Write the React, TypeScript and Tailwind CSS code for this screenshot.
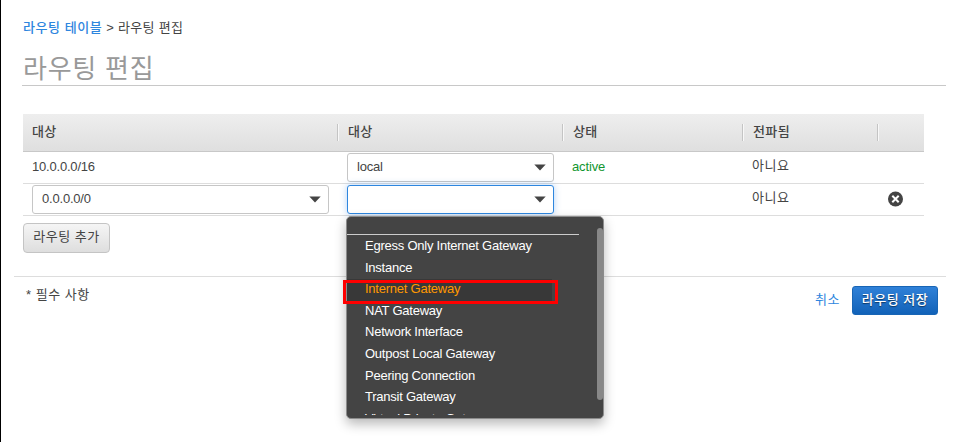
import type { ReactNode } from 'react';

const GATEWAYS = [
  'Egress Only Internet Gateway',
  'Instance',
  'Internet Gateway',
  'NAT Gateway',
  'Network Interface',
  'Outpost Local Gateway',
  'Peering Connection',
  'Transit Gateway',
  'Virtual Private Gateway',
];

function Caret() {
  return (
    <svg width="12" height="7" viewBox="0 0 12 7" className="shrink-0">
      <path d="M0.3 0.5H11.7L6 6.5Z" fill="#444" />
    </svg>
  );
}

function Select({ value, focused, children }: { value: string; focused?: boolean; children?: ReactNode }) {
  return (
    <div
      className={
        'relative flex h-[29px] w-full items-center justify-between rounded-[3px] border bg-white pr-[7px] pl-[9px] ' +
        (focused ? 'border-[#2e86de] shadow-[0_0_7px_rgba(60,140,235,0.4)]' : 'border-[#c6c6c6]')
      }
    >
      <span className="-mt-0.5 tracking-[-0.2px]">{value}</span>
      <Caret />
      {children}
    </div>
  );
}

function GatewayMenu() {
  return (
    <div className="absolute top-[30px] -left-0.5 z-10 h-[203px] w-[258px]">
      <div className="h-full w-full overflow-hidden rounded-[5px] border border-[#8c8c8c] bg-[#444] pt-[17px] shadow-[0_5px_12px_rgba(0,0,0,0.28)]">
        <div className="h-[181px] overflow-hidden">
          <div className="w-[232px] border-t border-[#ccc]" />
          <ul className="w-[205px] pt-px tracking-[-0.24px] text-white">
            {GATEWAYS.map((name) => (
              <li
                key={name}
                className={
                  'h-[21.6px] pl-[18px] leading-[20px] whitespace-nowrap ' +
                  (name === 'Internet Gateway' ? 'bg-[#383838] text-[#ff9900]' : '')
                }
              >
                {name}
              </li>
            ))}
          </ul>
        </div>
      </div>
      <div className="absolute top-[12px] right-px h-[172px] w-1.5 rounded-[3px] bg-[#888]" />
      <div className="absolute top-[64px] -left-[3px] h-[24px] w-[215px] border-3 border-[#fe0000]" />
    </div>
  );
}

function HeadCell({ label }: { label: string }) {
  return (
    <div className="flex h-full items-center">
      <div className="h-[17px] w-0.5 border-r border-l border-r-[#f8f8f8] border-l-[#c4c4c4]" />
      <span className="-mt-0.5 pl-[9px]">{label}</span>
    </div>
  );
}

const COLS = 'grid grid-cols-[314px_225px_180px_135px_47px]';

export default function App() {
  return (
    <div className="h-[442px] w-[956px] overflow-hidden border-l border-black bg-white font-['Liberation_Sans','Noto_Sans_CJK_KR',sans-serif] text-[13px] leading-[18px] text-[#444]">
      <nav className="ml-[22px] h-[52px] pt-[19px] text-[13px] tracking-[0.15px]">
        <a className="text-[13px] font-medium tracking-[0.55px] text-[#2e86de]">라우팅 테이블</a>
        <span className="tracking-[0.3px]"> &gt; 라우팅 편집</span>
      </nav>
      <h1 className="ml-[21px] h-[34px] w-[924px] border-b border-[#c8c8c8] pt-px pl-px text-[26px] leading-[32px] tracking-[0.75px] text-[#999]">
        라우팅 편집
      </h1>

      <section className="mt-[28px] ml-[22px] w-[901px]">
        <div className={COLS + ' h-[38px] border-b border-[#c8c8c8] bg-linear-to-b from-[#eee] to-[#dfdfdf] text-[13px] font-medium tracking-[0.4px]'}>
          <span className="self-center pb-0.5 pl-[9px]">대상</span>
          <HeadCell label="대상" />
          <HeadCell label="상태" />
          <HeadCell label="전파됨" />
          <HeadCell label="" />
        </div>
        <div className={COLS + ' h-8 items-center border-b border-[#ddd]'}>
          <span className="-mt-0.5 pl-[9px] tracking-[-0.2px]">10.0.0.0/16</span>
          <div className="pr-2 pl-[10px]">
            <Select value="local" />
          </div>
          <span className="-mt-0.5 pl-[10px] tracking-[-0.15px] text-[#11962f]">active</span>
          <span className="-mt-[3px] pl-[10px] tracking-[0.5px]">아니요</span>
        </div>
        <div className={COLS + ' h-8 items-center border-b border-[#ddd]'}>
          <div className="pr-2 pl-[9px]">
            <Select value="0.0.0.0/0" />
          </div>
          <div className="pr-2 pl-[10px]">
            <Select value="" focused>
              <GatewayMenu />
            </Select>
          </div>
          <span />
          <span className="-mt-[3px] pl-[10px] tracking-[0.5px]">아니요</span>
          <svg width="16" height="16" viewBox="0 0 16 16" className="-mt-px ml-[10px]">
            <circle cx="8.5" cy="8" r="7.5" fill="#444" />
            <path d="M5.3 4.8L11.7 11.2M11.7 4.8L5.3 11.2" stroke="#fff" strokeWidth="2" />
          </svg>
        </div>
        <button className="mt-[7px] flex h-[30px] w-[87px] items-center justify-center rounded-[4px] border border-[#c4c4c4] bg-linear-to-b from-[#f5f5f5] to-[#dedede] pb-0.5 text-[13px] tracking-[0.5px]">
          라우팅 추가
        </button>
      </section>

      <footer className="mt-[23px] ml-[13px] flex h-[50px] w-[932px] justify-between border-t border-[#ddd] pt-[9px] pr-2 pl-3">
        <span className="tracking-[0.5px]">* 필수 사항</span>
        <div className="flex items-start gap-[12px]">
          <a className="pt-[5px] text-[13px] tracking-[0.5px] text-[#2e86de]">취소</a>
          <button className="flex h-[29px] w-[86px] items-center justify-center rounded-[3px] border border-[#1865b5] bg-linear-to-b from-[#2f81d8] to-[#1162b8] pb-0.5 text-[13px] font-medium tracking-[0.5px] text-white text-shadow-[0_1px_1px_rgba(0,0,0,0.5)]">
            라우팅 저장
          </button>
        </div>
      </footer>
    </div>
  );
}
